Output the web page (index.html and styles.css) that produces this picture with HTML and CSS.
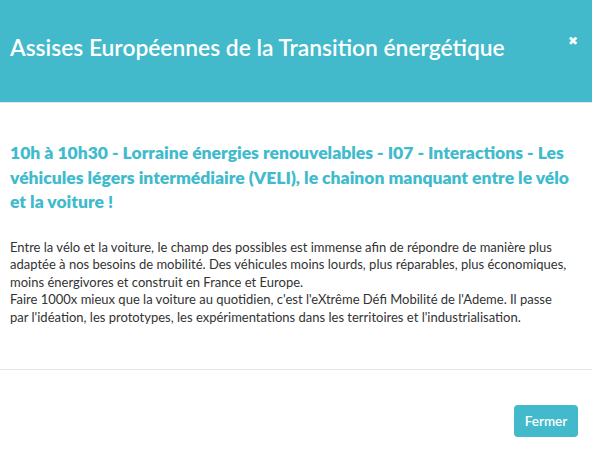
FILE: index.html
```html
<!DOCTYPE html>
<html lang="fr">
<head>
<meta charset="utf-8">
<title>Assises Européennes de la Transition énergétique</title>
<link rel="stylesheet" href="styles.css">
</head>
<body>
<div class="modal">
  <header class="modal-header">
    <h1 class="modal-title">Assises Européennes de la Transition énergétique</h1>
    <button class="close" type="button" aria-label="Fermer">&#x2716;</button>
  </header>
  <main class="modal-body">
    <h2 class="session-title">10h à 10h30 - Lorraine énergies renouvelables - I07 - Interactions - Les véhicules légers intermédiaire (VELI), le chainon manquant entre le vélo et la voiture !</h2>
    <p class="session-desc">Entre la vélo et la voiture, le champ des possibles est immense afin de répondre de manière plus adaptée à nos besoins de mobilité. Des véhicules moins lourds, plus réparables, plus économiques, moins énergivores et construit en France et Europe.<br>Faire 1000x mieux que la voiture au quotidien, c'est l'eXtrême Défi Mobilité de l'Ademe. Il passe par l'idéation, les prototypes, les expérimentations dans les territoires et l'industrialisation.</p>
  </main>
  <footer class="modal-footer">
    <button class="btn" type="button">Fermer</button>
  </footer>
</div>
</body>
</html>
```

FILE: styles.css
```css
* { box-sizing: border-box; }
html, body { margin: 0; padding: 0; background: #fff; }
body { font-family: Lato, "Open Sans", sans-serif; width: 592px; height: 463px; overflow: hidden; }
.modal { display: flex; flex-direction: column; height: 463px; }
.modal-header {
  background: #42bacb;
  height: 103px;
  border-bottom: 1px solid #e5e5e5;
  display: flex;
  align-items: flex-start;
  justify-content: space-between;
  padding: 33px 14px 0 10px;
}
.modal-title {
  margin: 0;
  color: #fff;
  font-size: 22.8px;
  font-weight: 600;
  line-height: 28px;
}
.close {
  background: none;
  border: 0;
  padding: 0;
  margin-top: 2px;
  color: #fff;
  font-size: 12px;
  line-height: 12px;
  cursor: pointer;
}
.modal-body {
  padding: 38px 10px 0 10px;
  height: 267px;
  border-bottom: 1px solid #e5e5e5;
}
.session-title {
  margin: 0 0 24px;
  color: #3fbbcd;
  font-size: 17.5px;
  font-weight: 800;
  line-height: 24.5px;
}
.session-desc {
  margin: 0;
  padding-right: 12px;
  color: #333;
  font-size: 13px;
  line-height: 17.6px;
}
.modal-footer {
  display: flex;
  justify-content: flex-end;
  padding: 35px 14px 0 0;
}
.btn {
  width: 64px;
  height: 32px;
  border: 0;
  border-radius: 4px;
  background: #42bacb;
  color: #fff;
  font-family: Lato, sans-serif;
  font-size: 13.5px;
  font-weight: 600;
  cursor: pointer;
}
```
